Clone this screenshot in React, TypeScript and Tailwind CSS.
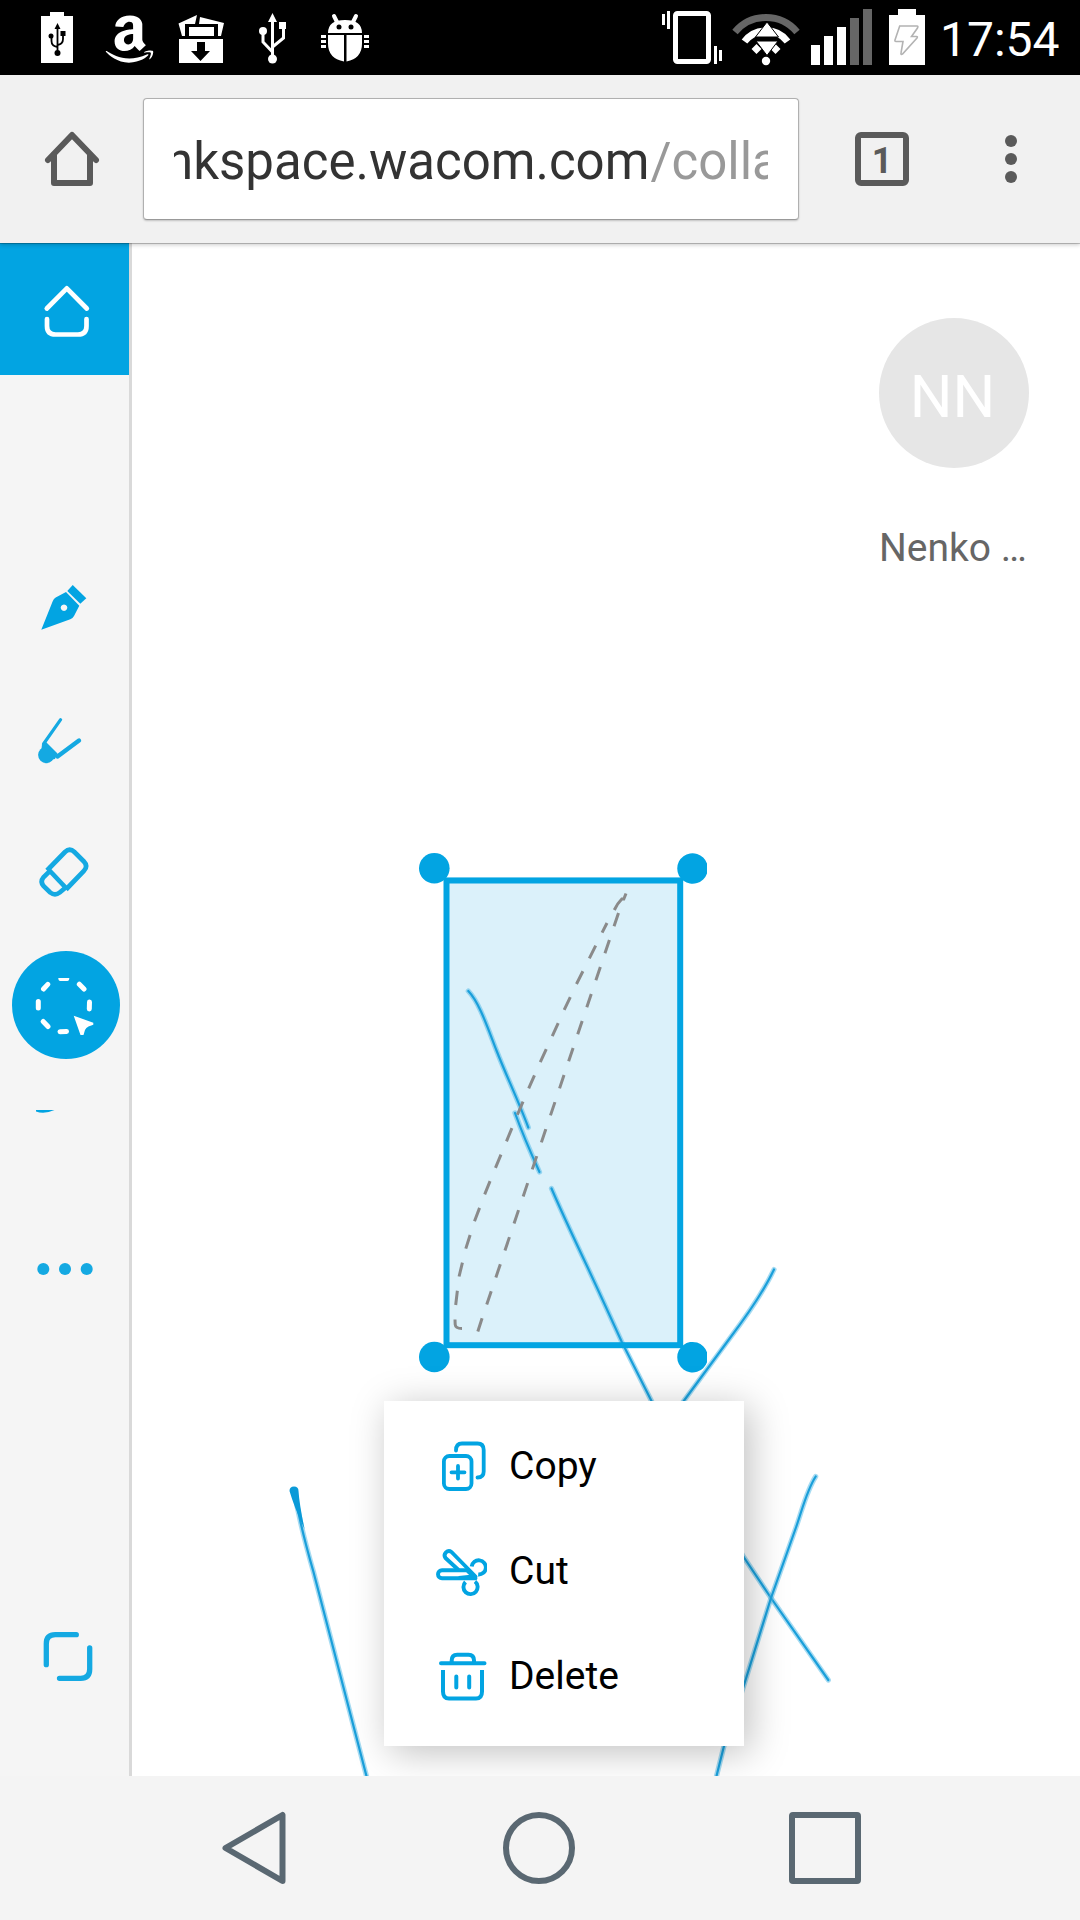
import type { ReactNode } from "react";
import { FaAmazon } from "react-icons/fa";

/** An inline drawing whose view box starts at (x, y) on the screen grid. */
function Glyph({ x, y, w, h, children }: { x: number; y: number; w: number; h: number; children: ReactNode }) {
  return (
    <svg width={w} height={h} viewBox={`${x} ${y} ${w} ${h}`} fill="none" className="block shrink-0">
      {children}
    </svg>
  );
}

function StatusBar() {
  return (
    <div className="flex h-[75px] bg-black pl-7">
      <div className="flex gap-[14px]">
        <Glyph x={28} y={0} w={58} h={75}>
          <path fill="#fff" d="M50 12h14v4h9v47H41V16h9z" />
          <g stroke="#000" strokeWidth="1.8">
            <path d="M57.5 53V27M57.5 47q-6-1-6-6v-5M57.5 45q5.500-1 5.500-6v-4" />
          </g>
          <path fill="#000" d="M54.500 29l3-6 3 6zM60.500 31h5v5h-5z" />
          <circle cx="51" cy="36" r="2.500" fill="#000" />
          <circle cx="57.500" cy="53" r="3" fill="#000" />
        </Glyph>
        <div className="flex h-[77px] w-[58px] items-center justify-center">
          <FaAmazon className="h-[54px] w-[49px] text-white" preserveAspectRatio="none" />
        </div>
        <Glyph x={172} y={0} w={58} h={75}>
          <g fill="#fff">
            <path d="M178.500 23.500L197 15l-2 9h-10v12h-3zM200 17l24 6-3 13h-3V24h-19z" />
            <path d="M189 27h25v9h-25z" />
            <path d="M179 39h44v24h-44z" />
          </g>
          <path fill="#000" d="M197 42h8v9h5l-9.500 10-9.500-10h6z" />
        </Glyph>
        <Glyph x={244} y={0} w={58} h={75}>
          <g stroke="#fff" strokeWidth="3">
            <path d="M272.500 59V20M272.500 52l-9.500-10V31M272.500 47l11-9V26" />
          </g>
          <g fill="#fff">
            <path d="M268 22l4.500-9 4.500 9zM279 22h7v7h-7z" />
            <circle cx="263" cy="31" r="4" />
            <circle cx="272.500" cy="59" r="4.500" />
          </g>
        </Glyph>
        <Glyph x={316} y={0} w={58} h={75}>
          <path stroke="#fff" strokeWidth="4" strokeLinecap="round" d="M334 16l4 8M356 16l-4 8" />
          <g fill="#fff">
            <path d="M328 33q0-13 17-13t17 13zM328 35h16v26.500q-16-3-16-18zM346.500 35H362v8.500q0 15-15.500 18z" />
            <path d="M321 35h5v3h-5zM321 40h5v3h-5zM321 45h5v3h-5zM364 35h5v3h-5zM364 40h5v3h-5zM364 45h5v3h-5z" />
          </g>
          <circle cx="339" cy="27" r="2.500" fill="#000" />
          <circle cx="351" cy="27" r="2.500" fill="#000" />
        </Glyph>
      </div>
      <div className="ml-auto flex w-[422px]">
        <Glyph x={658} y={0} w={72} h={75}>
          <rect x="675.500" y="13.500" width="33" height="48" rx="2" stroke="#fff" strokeWidth="5" />
          <path fill="#fff" d="M662 14h3v11h-3zM667 11h3v18h-3zM714 46h3v18h-3zM719 50h3v11h-3z" />
        </Glyph>
        <Glyph x={730} y={0} w={78} h={75}>
          <path d="M735 32A40.500 40.500 0 0 1 797 32" stroke="#666" strokeWidth="7" />
          <path d="M744.500 41.500A27 27 0 0 1 787.500 41.500" stroke="#fff" strokeWidth="7" />
          <path d="M754 51.500l5-5M773 46.500l5 5" stroke="#fff" strokeWidth="7" />
          <path d="M767 22l11.500 15h-23zM756 41h22l-11 14.500z" fill="#fff" stroke="#000" strokeWidth="1" />
          <circle cx="766" cy="61" r="4.200" fill="#fff" />
        </Glyph>
        <Glyph x={808} y={0} w={77} h={75}>
          <path fill="#fff" d="M811 45h9v20h-9zM824 36h9v29h-9zM837 27h9v38h-9z" />
          <path fill="#666" d="M850 18h9v47h-9zM863 9h9v56h-9z" />
        </Glyph>
        <Glyph x={885} y={0} w={55} h={75}>
          <path fill="#fff" d="M898 9h18v6h9v50h-36V15h9z" />
          <path
            d="M899.700 26H917q1.500 0 .5 2l-6 8.500h5q1.500 0 .5 1.500l-14.500 16q-2 1-1.500-1l2-11.500h-7q-1.500 0-1-1.500z"
            stroke="#b3b3b3"
            strokeWidth="1.600"
          />
        </Glyph>
        <span className="pt-px text-[48px] leading-[77px] whitespace-nowrap text-white">17:54</span>
      </div>
    </div>
  );
}

function BrowserBar() {
  return (
    <div className="relative z-10 flex h-[168px] bg-[#f1f1f1] shadow-[0_1px_0_rgba(0,0,0,0.2),0_2px_4px_rgba(0,0,0,0.2)]">
      <div className="w-[143px]">
        <Glyph x={0} y={75} w={143} h={168}>
          <g stroke="#5a5a5a" strokeWidth="6" strokeLinecap="round" strokeLinejoin="round">
            <path d="M48 160l24-25 24 25" />
            <path d="M54 155v28h36v-28" />
          </g>
        </Glyph>
      </div>
      <div className="mt-[23px] flex h-[122px] w-[656px] rounded-[4px] border border-[#b0b0b0] border-b-[#999] bg-white px-[30px] shadow-[0_1px_2px_rgba(0,0,0,0.2)]">
        <div className="flex w-full overflow-hidden text-[51px] leading-[125px] whitespace-nowrap text-[#333]">
          <span className="-ml-[9px]">nkspace.wacom.com</span>
          <span className="ml-px text-[#999]">/colla</span>
        </div>
      </div>
      <div className="mt-[57px] ml-14 flex h-[54px] w-[54px] items-center justify-center rounded-[6px] border-[6px] border-[#5a5a5a] pt-[3px] text-[36px] leading-none font-bold text-[#5a5a5a]">
        1
      </div>
      <div className="mt-[60px] ml-24 flex flex-col gap-[6px]">
        <i className="h-3 w-3 rounded-full bg-[#5a5a5a]" />
        <i className="h-3 w-3 rounded-full bg-[#5a5a5a]" />
        <i className="h-3 w-3 rounded-full bg-[#5a5a5a]" />
      </div>
    </div>
  );
}

const BLUE = "#02a4e2";
const TOOL = "#14a9e2";

function Sidebar() {
  return (
    <aside className="flex w-[132px] shrink-0 flex-col border-r-[3px] border-[#d9d9d9] bg-[#f5f5f5]">
      <div className="h-[132px] bg-[#02a4e2]">
        <Glyph x={0} y={243} w={129} h={132}>
          <g stroke="#fff" strokeWidth="4.700" strokeLinecap="round" strokeLinejoin="round">
            <path d="M46.800 308.500l20-20.200 20 20.200" />
            <path d="M47 319v7q0 8.500 8.500 8.500h22.500q8.500 0 8.500-8.500v-7" />
          </g>
        </Glyph>
      </div>
      <div className="mt-[168px] flex flex-col">
        <Glyph x={0} y={543} w={129} h={132}>
          <path
            fill={BLUE}
            fillRule="evenodd"
            d="M41.300 629.700l11.400-28.500q1-2.500 3-3.600L66 592l13.300 13.700-5.300 10.300q-1.200 2.300-3.700 3.200zM64 604.400a3.300 3.300 0 1 0 .01 0z"
          />
          <path fill={BLUE} d="M72.700 585l13.600 13.200-6 5.500L67.300 591z" />
        </Glyph>
        <Glyph x={0} y={675} w={129} h={132}>
          <g stroke={TOOL} strokeLinecap="round">
            <path strokeWidth="3.200" d="M60.600 719.700L43.500 744" />
            <path strokeWidth="4.400" d="M79 740.500L57.500 756.500" />
          </g>
          <path fill={TOOL} d="M42 744.500l4-2.500 11.500 11.500-2.500 5.500-10 2-4-8z" />
          <circle cx="46.300" cy="755" r="8.200" fill={TOOL} />
        </Glyph>
        <Glyph x={0} y={807} w={129} h={132}>
          <g stroke={TOOL} strokeWidth="4.700">
            <path d="M47 870.500L65 852q4.700-4.500 9.400 0l9.500 9.500q4.500 4.700 0 9.400L66 889.500" />
            <path d="M49.500 870.500l16.500 17.500" />
            <path d="M50 870.800l-6.300 6.200q-4 4.700 0 9.200l6.500 6.300q4.800 3.800 9.500 0l6-5" />
          </g>
        </Glyph>
        <Glyph x={0} y={939} w={129} h={132}>
          <circle cx="66" cy="1005" r="54" fill={BLUE} />
          <g stroke="#fff" strokeWidth="5" strokeLinecap="round">
            <path d="M43.500 989l4.300-4.600M79.300 984.200l4.700 4.800M38.300 1001.500v6.500M89.500 1002l-.2 7M43.200 1021.500l4.800 5M60 1031.700l6.500-.3" />
          </g>
          <path fill="#fff" d="M58.300 978h11q0 3-2 3h-7q-2 0-2-3z" />
          <path fill="#fff" d="M73.700 1015.700l19.600 7v2l-4.800 1.800q-2.500 1-3.500 3.500l-1.500 5h-3z" />
        </Glyph>
        <Glyph x={0} y={1071} w={129} h={132}>
          <path fill={BLUE} d="M36 1110h18.500q-10 4.500-18.500 1.500z" />
        </Glyph>
        <Glyph x={0} y={1203} w={129} h={132}>
          <circle cx="43.300" cy="1269" r="6" fill={TOOL} />
          <circle cx="65" cy="1269" r="6" fill={TOOL} />
          <circle cx="86.700" cy="1269" r="6" fill={TOOL} />
        </Glyph>
      </div>
      <div className="mt-auto mb-[54px]">
        <Glyph x={0} y={1590} w={129} h={132}>
          <g stroke={TOOL} strokeWidth="5.300" strokeLinecap="round">
            <path d="M46.300 1664.700v-21q0-9 9-9h21" />
            <path d="M89.700 1648v21.300q0 9-9 9H59.500" />
          </g>
        </Glyph>
      </div>
    </aside>
  );
}

/** Pen strokes on the board: a soft wide edge below a darker core. */
const STROKES = [
  "M468.300 991C479 1002 487 1026 496.500 1050.500S518 1100 528.300 1127.500",
  "M515 1113Q524 1138 539.500 1172",
  "M551.500 1188.500Q562 1213 586.500 1265Q600 1294 621.700 1341.800Q634 1366 652 1402L744 1557.500L771 1598L828.300 1680",
  "M774 1269.500Q761 1297 730 1338L683 1402",
  "M815.700 1476.500C807 1490 803 1507 796.500 1526L771 1598L744 1685L724 1746L715.500 1780",
  "M294 1490Q300 1525 313.500 1572L367.500 1780",
];

const LASSO_LEFT =
  "M455.700 1305L459 1276.800L465.700 1248.900L474.300 1221.800L484.300 1195.400L495 1168.900L506 1142.500L516.700 1116.400L528 1090L539.300 1064.300L551.300 1038.200L563 1012.500L575.300 986.400L588 961.100L600.700 935.400L607 923";

function Board() {
  return (
    <Glyph x={132} y={243} w={948} h={1533}>
      <rect x="444" y="877" width="239" height="471" fill="#dbf1fa" />
      <g strokeLinecap="round" strokeLinejoin="round">
        {STROKES.map((d) => (
          <g key={d}>
            <path d={d} stroke="#4db8e6" strokeOpacity="0.500" strokeWidth="5.200" />
            <path d={d} stroke="#1a9fda" strokeWidth="2.200" />
          </g>
        ))}
        <path fill="#0a9ad8" d="M289.500 1491q0-4.500 4.500-4.500t4.500 4.500q1 14 6 38q-10-21-15-38z" />
      </g>
      <g stroke="#8a8a8a" strokeWidth="3">
        <path d={LASSO_LEFT} strokeDasharray="14.300 14.400" />
        <path d="M618.500 913L545.700 1129.600L482 1318.500L477.500 1332.500" strokeDasharray="14 14.500" />
        <path d="M614.300 910q3-6.500 7.500-11h2l2.200-5.500M462 1328.500q-6.500 0-6.800-4l-.2-5" />
      </g>
      <rect x="446.500" y="880.500" width="233.700" height="464.700" stroke={BLUE} strokeWidth="6" />
      <g fill={BLUE}>
        <circle cx="434.300" cy="868.300" r="15.300" />
        <circle cx="434.300" cy="1357" r="15.300" />
        <path d="M707 863.500v10a15.300 15.300 0 1 1 0-10zM707 1352.200v10a15.300 15.300 0 1 1 0-10z" />
      </g>
    </Glyph>
  );
}

function MenuRow({ label, children }: { label: string; children: ReactNode }) {
  return (
    <div className="flex h-[105px] items-center gap-[22px] pl-[51px] text-[39px] leading-none text-black">
      {children}
      <span className="pb-px">{label}</span>
    </div>
  );
}

function ContextMenu() {
  return (
    <div className="absolute top-[1158px] left-[252px] h-[345px] w-[360px] bg-white pt-[13px] shadow-[6px_6px_36px_rgba(0,0,0,0.25)]">
      <MenuRow label="Copy">
        <Glyph x={435} y={1440} w={52} h={54}>
          <g stroke={BLUE} strokeWidth="3.800" strokeLinecap="round">
            <rect x="443.900" y="1456" width="27.600" height="33" rx="5.500" />
            <path d="M458 1466v12.500M451.500 1472.300h13" />
            <path d="M456 1450.500q0-7 6-7h15.500q6.200 0 6.200 6.500v21.500q0 6-6.200 6" />
          </g>
        </Glyph>
      </MenuRow>
      <MenuRow label="Cut">
        <Glyph x={435} y={1548} w={52} h={54}>
          <g stroke={BLUE} strokeWidth="3.900" strokeLinecap="round" strokeLinejoin="round">
            <path d="M458 1572.500l-12.500-11.500a4.300 4.300 0 0 1 6-6L475.500 1579.500" />
            <path d="M468 1573.300h-26a4 4 0 0 0 0 8h33.500l-8-7.500M459 1581l14-1.500" />
            <path strokeLinecap="butt" d="M471.700 1569.500a7.100 7.100 0 1 1 6.500 8M465.500 1585a7.100 7.100 0 1 0 9.500-.5" />
          </g>
        </Glyph>
      </MenuRow>
      <MenuRow label="Delete">
        <Glyph x={435} y={1650} w={52} h={54}>
          <g stroke={BLUE} strokeWidth="4" strokeLinecap="round">
            <path d="M441 1663.300h43.500M456.300 1676.500v11M469.200 1676.500v11" />
            <path strokeLinecap="butt" d="M451.700 1663v-2.500q0-5.800 5.500-5.800h11.300q5.500 0 5.500 5.800v2.500" />
            <path strokeLinecap="butt" d="M443 1670v21.500q0 7 6 7h27q6 0 6-7V1670" />
          </g>
        </Glyph>
      </MenuRow>
    </div>
  );
}

function NavBar() {
  return (
    <nav className="flex h-36 items-center bg-[#f4f4f4] pl-[218px]">
      <Glyph x={218} y={1808} w={72} h={80}>
        <path d="M225.500 1848l57-33v66z" stroke="#5a6872" strokeWidth="6" strokeLinejoin="round" />
      </Glyph>
      <div className="ml-[213px] h-[72px] w-[72px] rounded-full border-[6px] border-[#5a6872]" />
      <div className="ml-[214px] h-[72px] w-[72px] rounded-[4px] border-[6px] border-[#5a6872]" />
    </nav>
  );
}

export default function App() {
  return (
    <div className="flex h-[1920px] w-[1080px] flex-col overflow-hidden bg-white font-['Roboto',sans-serif]">
      <StatusBar />
      <BrowserBar />
      <div className="flex h-[1533px]">
        <Sidebar />
        <main className="relative w-[948px] overflow-hidden bg-white">
          <Board />
          <div className="absolute top-[75px] right-[51px] w-[150px]">
            <div className="flex h-[150px] items-center justify-center rounded-full bg-[#e6e6e6] pt-2 pr-[3px] text-[60px] text-white">
              NN
            </div>
            <div className="mt-[57px] text-[39px] leading-[46px] whitespace-nowrap text-[#666]">Nenko …</div>
          </div>
          <ContextMenu />
        </main>
      </div>
      <NavBar />
    </div>
  );
}
